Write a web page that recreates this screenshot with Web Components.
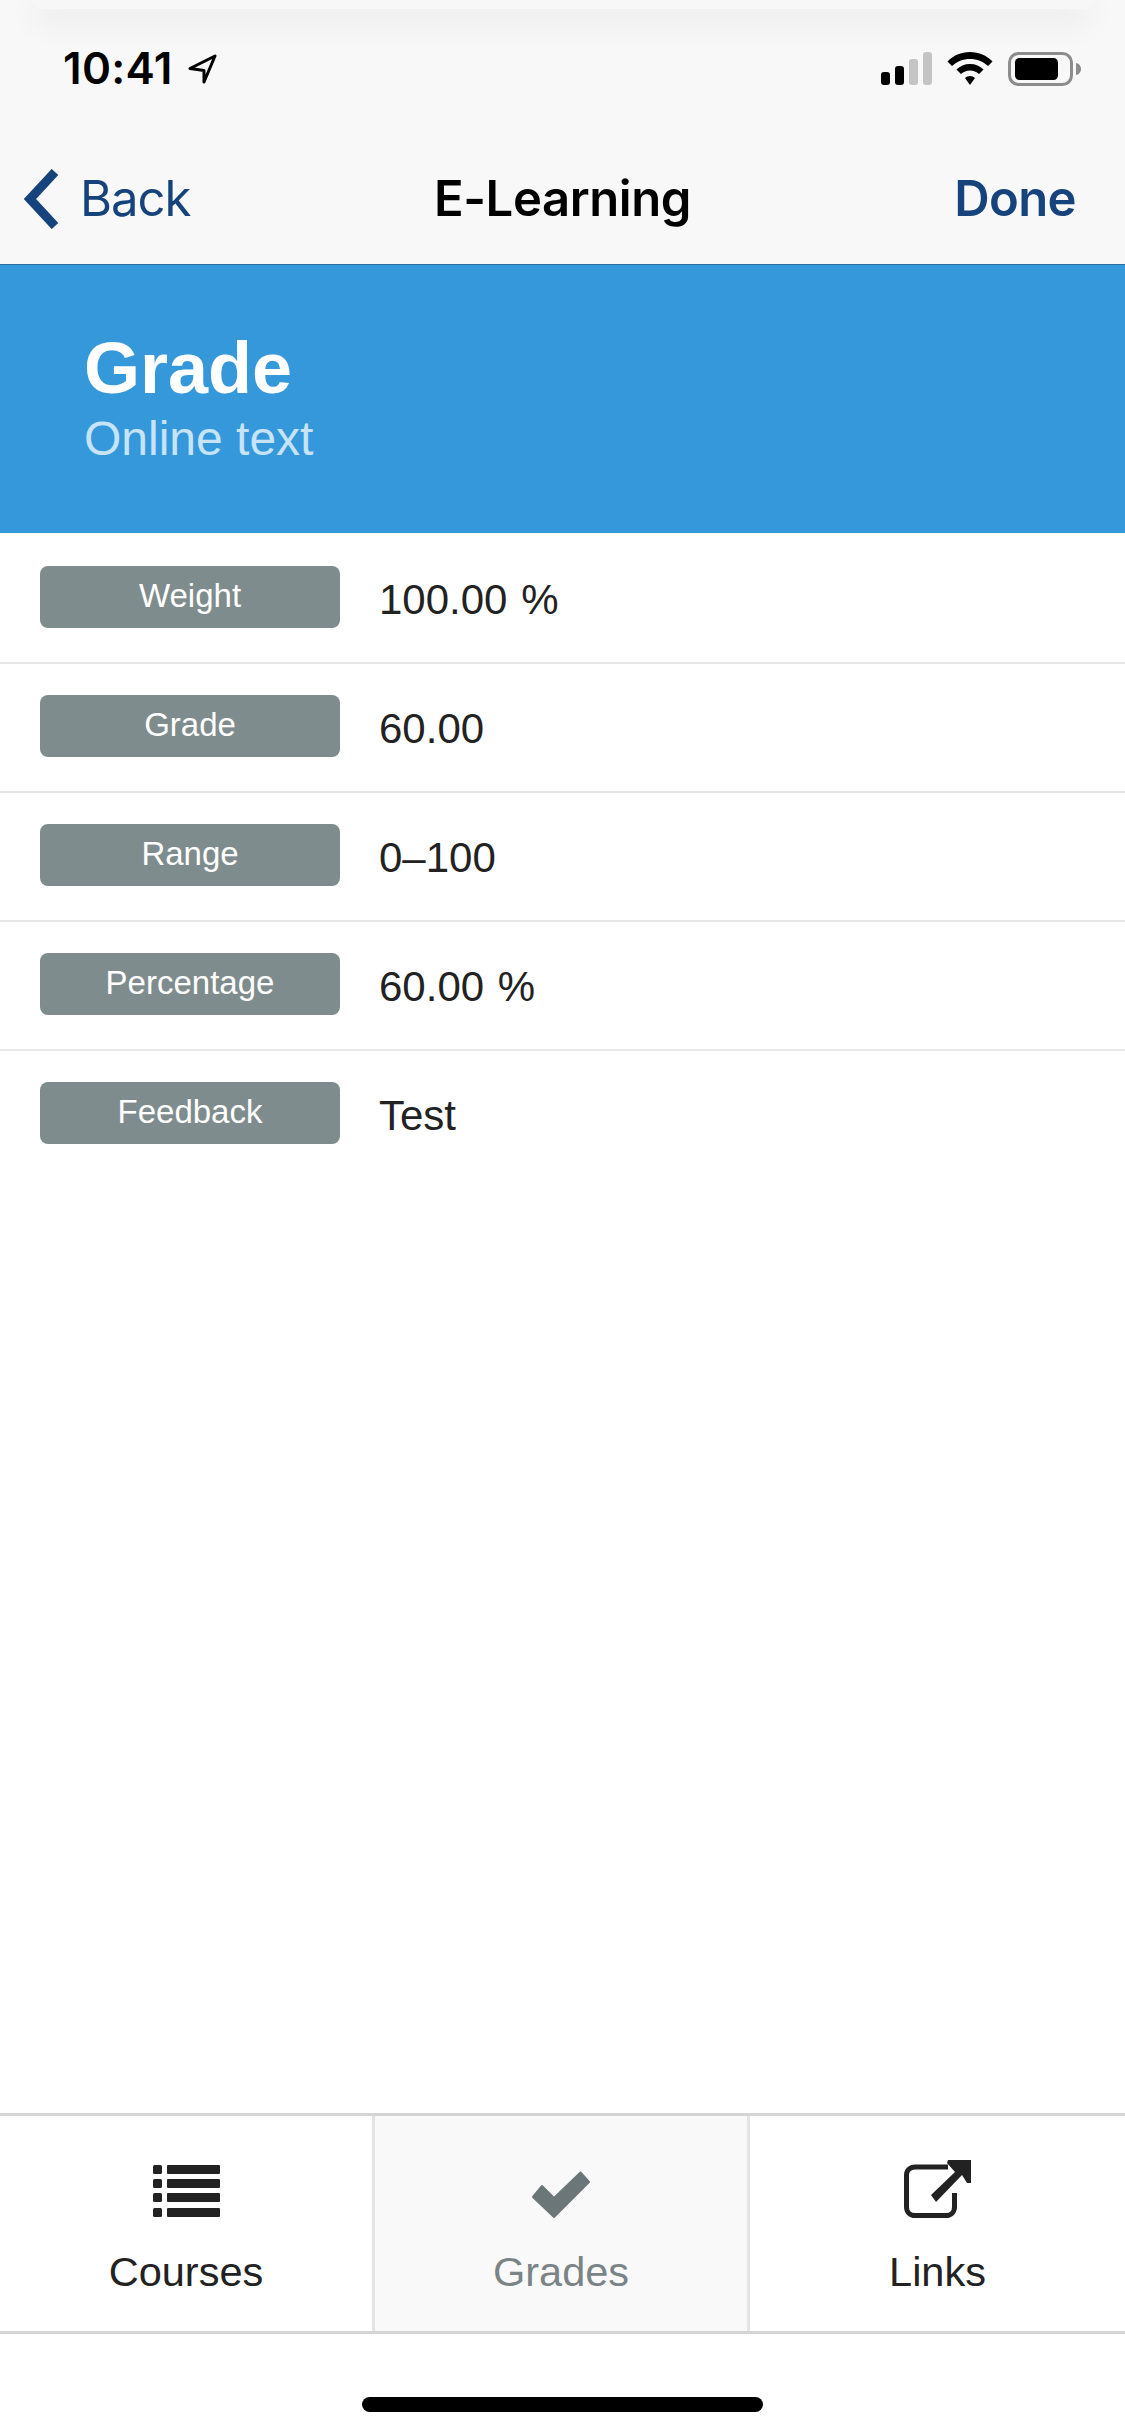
<!DOCTYPE html>
<html lang="en"><head><meta charset="utf-8"><title>E-Learning</title>
<style>
html,body{margin:0;padding:0;background:#fff}
body{font-family:"Liberation Sans",Arial,sans-serif;width:1125px;height:2436px;overflow:hidden}
app-shell{height:2436px}
</style></head><body>
<app-shell>
  <top-chrome title-text="E-Learning"></top-chrome>
  <grade-banner heading="Grade" sub="Online text"></grade-banner>
  <grade-row label="Weight">100.00 %</grade-row>
  <grade-row label="Grade">60.00</grade-row>
  <grade-row label="Range">0–100</grade-row>
  <grade-row label="Percentage">60.00 %</grade-row>
  <grade-row label="Feedback" last>Test</grade-row>
  <div slot="bottom">
    <tab-bar></tab-bar>
    <home-indicator></home-indicator>
  </div>
</app-shell>
<script>
function shell(el,html){el.attachShadow({mode:'open'}).innerHTML=html}
customElements.define('app-shell',class extends HTMLElement{constructor(){super();shell(this,`<style>
:host{display:flex;flex-direction:column;width:1125px}
.fill{flex:1}
</style><slot></slot><div class="fill"></div><slot name="bottom"></slot>`)}});
customElements.define('top-chrome',class extends HTMLElement{connectedCallback(){if(this.shadowRoot)return;shell(this,`<style>
:host{display:block;height:264px;background:#f8f8f8;overflow:hidden;font-family:Inter,"Liberation Sans",sans-serif;color:#000}
.sheet{height:9px;margin:0 32px;background:#f7f7f7;border-radius:0 0 30px 30px;box-shadow:0 10px 30px rgba(0,0,0,.12)}
.status{display:flex;align-items:center;justify-content:space-between;height:34px;margin-top:43px;padding:0 43px 0 63px}
.time{display:flex;align-items:center;gap:14px;font-size:44px;font-weight:600;letter-spacing:.3px;line-height:34px}
.time span{padding-bottom:2px}
.icons{display:flex;align-items:center}
.nav{display:grid;grid-template-columns:1fr auto 1fr;align-items:center;height:64px;margin-top:81px;padding:0 49px;font-size:49px;line-height:64px}
.back{display:flex;align-items:center;gap:20px;margin-left:-25px;color:#17437c;font-weight:400;letter-spacing:-1px}
.title{font-weight:600;letter-spacing:-.4px}
.done{justify-self:end;color:#17437c;font-weight:600;letter-spacing:-.6px}
svg{display:block}
</style>
<div class="sheet"></div>
<div class="status"><div class="time"><span>10:41</span>
<svg width="30" height="30" viewBox="0 0 30 30"><path d="M28 2 3 14.500 17 16.500 17 28Z" fill="none" stroke="#000" stroke-width="3" stroke-linejoin="round"/></svg></div>
<div class="icons">
<svg width="52" height="34" viewBox="0 0 52 34" style="margin-right:14px"><rect x="0" y="20" width="9" height="13" rx="3"/><rect x="14" y="14" width="9" height="19" rx="3"/><rect x="28" y="7" width="9" height="26" rx="3" fill="#c4c4c4"/><rect x="42" y="0" width="9" height="33" rx="3" fill="#c4c4c4"/></svg>
<svg width="46" height="34" viewBox="0 0 46 34" style="margin-right:15px"><path d="M23 0C14 0 6.500 3.500 .5 9.500L5 14C10 9.500 16 7 23 7S36 9.500 41 14L45.500 9.500C39.500 3.500 32 0 23 0Z"/><path d="M23 12C17.500 12 13 14 9.500 17.500L14 22C16.500 19.700 19.500 18.500 23 18.500S29.500 19.700 32 22L36.500 17.500C33 14 28.500 12 23 12Z"/><path d="M23 24C21 24 19.300 24.700 18 26L23 33 28 26C26.700 24.700 25 24 23 24Z"/></svg>
<svg width="74" height="34" viewBox="0 0 74 34"><rect x="1.500" y="1.500" width="62" height="31" rx="9" fill="none" stroke="#8c8c8c" stroke-width="3"/><rect x="7" y="6" width="43" height="22" rx="4.500"/><path d="M68 11c3 .5 5 3 5 6s-2 5.500-5 6Z" fill="#8c8c8c"/></svg>
</div></div>
<div class="nav"><div class="back"><svg width="36" height="60" viewBox="0 0 36 60"><path d="M31 3 6 30 31 57" fill="none" stroke="#17437c" stroke-width="9"/></svg><span>Back</span></div>
<div class="title">${this.getAttribute('title-text')}</div><div class="done">Done</div></div>`)}});
customElements.define('grade-banner',class extends HTMLElement{connectedCallback(){if(this.shadowRoot)return;shell(this,`<style>
:host{display:block;box-sizing:border-box;height:269px;margin-bottom:2px;background:#3598db;border-top:1px solid #2a6c9e;padding:63px 0 0 84px;color:#fff}
.h{font-size:72px;font-weight:700;line-height:80px}
.s{font-size:48px;line-height:56px;color:#c7e3f7;margin-top:3px}
</style><div class="h">${this.getAttribute('heading')}</div><div class="s">${this.getAttribute('sub')}</div>`)}});
customElements.define('grade-row',class extends HTMLElement{connectedCallback(){if(this.shadowRoot)return;const last=this.hasAttribute('last');shell(this,`<style>
:host{display:flex;align-items:center;padding:31px 40px 34px;gap:39px;background:#fff;border-bottom:2px solid ${last?'transparent':'#e6e6e6'}}
.badge{width:300px;height:62px;flex:none;border-radius:8px;background:#7f8c8d;color:#fff;font-size:33px;line-height:60px;text-align:center}
.v{font-size:42px;line-height:48px;color:#222;padding-top:6px;word-spacing:2px}
</style><div class="badge">${this.getAttribute('label')}</div><div class="v"><slot></slot></div>`)}});
customElements.define('tab-bar',class extends HTMLElement{constructor(){super();shell(this,`<style>
:host{display:grid;grid-template-columns:372px 378px 375px;box-sizing:border-box;height:221px;border-top:3px solid #d4d4d4;border-bottom:3px solid #d4d4d4;background:#fff}
</style>
<tab-item label="Courses"><svg width="67" height="60" viewBox="0 0 67 60" fill="#222"><rect y="5" width="9" height="9" rx="1.500"/><rect x="14" y="5" width="53" height="9" rx="1"/><rect y="19" width="9" height="9" rx="1.500"/><rect x="14" y="19" width="53" height="9" rx="1"/><rect y="33" width="9" height="9" rx="1.500"/><rect x="14" y="33" width="53" height="9" rx="1"/><rect y="48" width="9" height="9" rx="1.500"/><rect x="14" y="48" width="53" height="9" rx="1"/></svg></tab-item>
<tab-item label="Grades" active><svg width="60" height="60" viewBox="0 0 60 60"><path d="M11 26 23 38 49.500 12.500 58 22 23 57 2 37Z" fill="#6b7678" stroke="#6b7678" stroke-width="2" stroke-linejoin="round"/></svg></tab-item>
<tab-item label="Links"><svg width="67" height="60" viewBox="0 0 67 60"><path d="M44 7H11C6 7 2.500 10.500 2.500 15V47C2.500 52 6 55.500 11 55.500H42C47 55.500 50.500 52 50.500 47V33" fill="none" stroke="#222" stroke-width="5"/><path d="M44 0H67V23L63 23 58 15 32 42 27 35 51 12 43 3Z" fill="#222"/></svg></tab-item>`)}});
customElements.define('tab-item',class extends HTMLElement{connectedCallback(){if(this.shadowRoot)return;const a=this.hasAttribute('active');shell(this,`<style>
:host{display:flex;flex-direction:column;align-items:center;padding-top:44px;box-sizing:border-box;${a?'background:#faf9fa;border-left:3px solid #e4e4e4;border-right:3px solid #e4e4e4;':''}color:${a?'#7a8486':'#222'}}
.l{margin-top:28px;font-size:41.5px;line-height:48px}
svg,::slotted(svg){display:block}
</style><slot></slot><div class="l">${this.getAttribute('label')}</div>`)}});
customElements.define('home-indicator',class extends HTMLElement{constructor(){super();shell(this,`<style>
:host{display:block;height:102px;box-sizing:border-box;padding:63px 0 0 362px;background:#fff}
.b{width:401px;height:15px;border-radius:8px;background:#000}
</style><div class="b"></div>`)}});
</script>
</body></html>
